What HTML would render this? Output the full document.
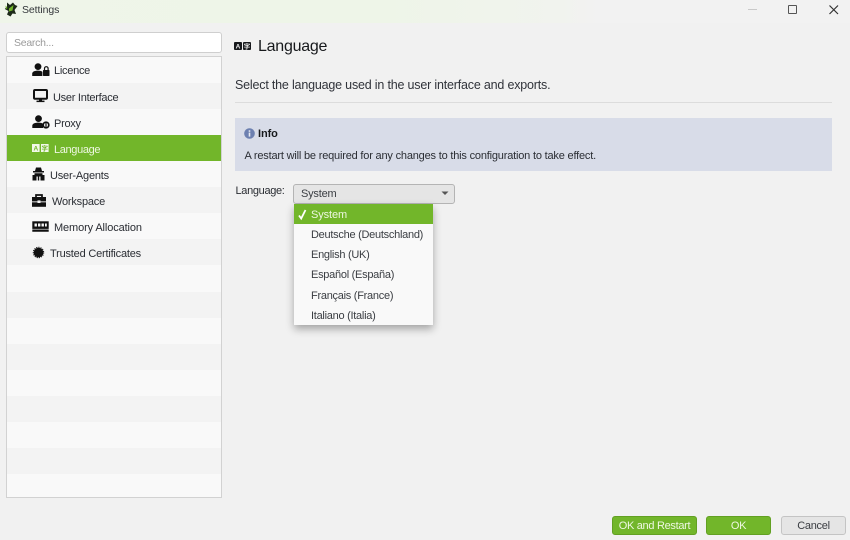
<!DOCTYPE html>
<html>
<head>
<meta charset="utf-8">
<style>
html,body{margin:0;padding:0}
body{width:850px;height:540px;overflow:hidden;background:#f1f1f1;position:relative;font-family:"Liberation Sans",sans-serif;font-size:11px;color:#2a2d33}
.a{position:absolute;white-space:nowrap}
#tb{left:0;top:0;width:850px;height:23px;background:linear-gradient(90deg,#eff5e9 0,#eef5e8 380px,#f1f3ee 560px,#f2f2f2 600px,#f2f2f2 850px)}
#search{left:6px;top:32px;width:214px;height:19px;background:#fff;border:1px solid #cfcfcf;border-radius:3px}
#list{left:6px;top:56px;width:214px;height:440px;border:1px solid #d2d2d2;background:#f9f9f9;overflow:hidden}
.r{position:absolute;left:0;width:214px;height:26px}
.e{background:#f3f3f3}
.g{background:#72b62a}
.t{position:absolute;line-height:14px;white-space:nowrap;letter-spacing:-.27px}
svg{position:absolute;overflow:visible}
.btn{position:absolute;top:516px;height:17px;border-radius:3px;text-align:center;line-height:19px;font-size:11px;letter-spacing:-.3px}
.gb{background:#72b62a;border:1px solid #62a022;color:#eef7e2}
#dd{left:294px;top:204px;width:139px;height:121px;background:#f9f9f9;box-shadow:0 4px 8px rgba(0,0,0,.32)}
.o{position:absolute;left:17px;line-height:14px;white-space:nowrap;color:#3a3d42;letter-spacing:-.27px}
</style>
</head>
<body>
<div class="a" id="tb"></div>
<svg style="left:4px;top:2px" width="14" height="15" viewBox="0 0 14 15"><path d="M3 .5 L6 3 L9 .5 L11 3 L13.5 4 L10.5 8 L12 12 L8.5 11.5 L6.5 14.5 L3 12.5 L4.5 9 L.8 7 L3 4.5 Z" fill="#1d2a18"/><path d="M5 6.5 L9.5 3 L8.5 8.5 L5 9.5 Z" fill="#72b62a"/><path d="M1.5 3.5 L3.5 6 L2 7Z" fill="#72b62a"/></svg>
<div class="a" style="left:22px;top:3px;line-height:14px;color:#33363a;font-size:10.5px;letter-spacing:-.08px">Settings</div>
<div class="a" style="left:748px;top:9px;width:9px;height:1px;background:#c9c9c9"></div>
<div class="a" style="left:788px;top:5px;width:7px;height:7px;border:1.4px solid #555;border-radius:1px"></div>
<svg style="left:829px;top:4.5px" width="10" height="10" viewBox="0 0 10 10"><path d="M.5 .5 L9 9 M9 .5 L.5 9" stroke="#333" stroke-width="1.2" fill="none"/></svg>

<div class="a" id="search"></div>
<div class="a" style="left:14px;top:36px;line-height:14px;color:#9a9a9a;font-size:10.5px;letter-spacing:-.25px">Search...</div>

<div class="a" id="list">
<div class="r" style="top:0"></div>
<div class="r e" style="top:26px"></div>
<div class="r" style="top:52px"></div>
<div class="r g" style="top:78px"></div>
<div class="r" style="top:104px"></div>
<div class="r e" style="top:130px"></div>
<div class="r" style="top:156px"></div>
<div class="r e" style="top:182px"></div>
<div class="r" style="top:208px"></div>
<div class="r e" style="top:235px"></div>
<div class="r" style="top:261px"></div>
<div class="r e" style="top:287px"></div>
<div class="r" style="top:313px"></div>
<div class="r e" style="top:339px"></div>
<div class="r" style="top:365px"></div>
<div class="r e" style="top:391px"></div>
<div class="r" style="top:417px"></div>
</div>

<!-- Licence -->
<svg style="left:32px;top:63px" width="18" height="14" viewBox="0 0 18 14"><circle cx="6" cy="3.6" r="3.4" fill="#111"/><path d="M.2 13 V10.6 C.2 8.6 2.8 7.6 6 7.6 C7.8 7.6 9.4 8 10.4 8.8 V13 Z" fill="#111"/><rect x="11" y="7" width="6.5" height="6" rx=".6" fill="#111"/><path d="M12.5 7.5 V5.5 a1.8 1.8 0 0 1 3.6 0 V7.5" fill="none" stroke="#111" stroke-width="1.2"/></svg>
<div class="a t" style="left:54px;top:64px">Licence</div>
<!-- UI -->
<svg style="left:33px;top:89px" width="15" height="14" viewBox="0 0 15 14"><rect x="1" y="1" width="13" height="8.8" rx="1" fill="none" stroke="#111" stroke-width="2"/><rect x="6" y="10" width="3" height="2" fill="#111"/><rect x="3.5" y="11.6" width="8" height="1.5" fill="#111"/></svg>
<div class="a t" style="left:53px;top:91px">User Interface</div>
<!-- Proxy -->
<svg style="left:32px;top:115px" width="18" height="14" viewBox="0 0 18 14"><circle cx="6.5" cy="3.6" r="3.4" fill="#111"/><path d="M.3 13 V10.6 C.3 8.6 3 7.6 6.5 7.6 C8.5 7.6 10 8 11 8.8 V13 Z" fill="#111"/><circle cx="14" cy="10" r="2.8" fill="none" stroke="#111" stroke-width="1.7"/><rect x="13.4" y="8" width="1.2" height="4" fill="#111"/></svg>
<div class="a t" style="left:54px;top:117px">Proxy</div>
<!-- Language -->
<svg style="left:32px;top:144px" width="17" height="9" viewBox="0 0 17 9"><rect x="0" y="0" width="7.6" height="8" fill="#f2f8ea"/><rect x="9" y="0" width="7.6" height="8" fill="#f2f8ea"/><text x="3.8" y="6.7" font-size="6.5" font-weight="bold" text-anchor="middle" fill="#72b62a" font-family="Liberation Sans">A</text><text x="12.8" y="6.7" font-size="6.5" font-weight="bold" text-anchor="middle" fill="#72b62a" font-family="Liberation Sans, Noto Sans CJK SC, sans-serif">字</text></svg>
<div class="a t" style="left:54px;top:143px;color:#eef7e2;letter-spacing:-.35px">Language</div>
<!-- User-Agents -->
<svg style="left:32px;top:167px" width="13" height="14" viewBox="0 0 13 14"><path d="M4 .5 H9 L10 4 H12 V5.5 H1 V4 H3 Z" fill="#111"/><path d="M2.5 6.3 H10.5 L10.5 8 H12.5 V13.5 H.5 V8 H2.5 Z" fill="#111"/><rect x="4.5" y="9.5" width="1.3" height="4" fill="#f9f9f9"/><rect x="7.2" y="9.5" width="1.3" height="4" fill="#f9f9f9"/></svg>
<div class="a t" style="left:50px;top:169px;letter-spacing:-.2px">User-Agents</div>
<!-- Workspace -->
<svg style="left:32px;top:194px" width="14" height="13" viewBox="0 0 14 13"><path d="M4 3 V1 H10 V3" fill="none" stroke="#111" stroke-width="1.7"/><rect x="0" y="3" width="14" height="4.4" fill="#111"/><rect x="0" y="8.3" width="14" height="4.5" fill="#111"/><rect x="5.5" y="6.4" width="3" height="2.6" fill="#f3f3f3"/></svg>
<div class="a t" style="left:52px;top:195px;letter-spacing:-.2px">Workspace</div>
<!-- Memory -->
<svg style="left:32px;top:221px" width="17" height="11" viewBox="0 0 17 11"><rect x=".3" y=".3" width="16.4" height="7.6" fill="#111"/><rect x="2.5" y="2.5" width="2.4" height="3" fill="#f9f9f9"/><rect x="6" y="2.5" width="2.4" height="3" fill="#f9f9f9"/><rect x="9.5" y="2.5" width="2.4" height="3" fill="#f9f9f9"/><rect x="13" y="2.5" width="1.8" height="3" fill="#f9f9f9"/><path d="M.3 9.6 H16.7" stroke="#111" stroke-width="2.2"/></svg>
<div class="a t" style="left:54px;top:221px;letter-spacing:-.12px">Memory Allocation</div>
<!-- Trusted -->
<svg style="left:33px;top:247px" width="11" height="11" viewBox="0 0 11 11"><circle cx="5.5" cy="5.5" r="4.8" fill="#111"/><circle cx="5.5" cy="5.5" r="5.2" fill="none" stroke="#111" stroke-width="1" stroke-dasharray="1.2 1"/></svg>
<div class="a t" style="left:50px;top:247px;letter-spacing:-.2px">Trusted Certificates</div>

<!-- Main -->
<svg style="left:234px;top:42px" width="17" height="9" viewBox="0 0 17 9"><rect x="0" y="0" width="8" height="8" rx="1" fill="#17191c"/><rect x="9" y="0" width="8" height="8" rx="1" fill="#17191c"/><text x="4" y="6.7" font-size="6.5" font-weight="bold" text-anchor="middle" fill="#f1f1f1" font-family="Liberation Sans">A</text><text x="13" y="6.7" font-size="6.5" font-weight="bold" text-anchor="middle" fill="#f1f1f1" font-family="Liberation Sans, Noto Sans CJK SC, sans-serif">字</text></svg>
<div class="a" style="left:258px;top:37px;font-size:16px;line-height:20px;color:#17191c;letter-spacing:-.25px">Language</div>
<div class="a" style="left:235px;top:77px;font-size:12.5px;line-height:16px;color:#30333a;letter-spacing:-.19px">Select the language used in the user interface and exports.</div>
<div class="a" style="left:235px;top:102px;width:597px;height:1px;background:#dcdcdc"></div>
<div class="a" style="left:235px;top:118px;width:597px;height:53px;background:#d8dce8"></div>
<svg style="left:244px;top:128px" width="11" height="11" viewBox="0 0 11 11"><circle cx="5.5" cy="5.5" r="5.3" fill="#6d80b0"/><rect x="4.7" y="4.6" width="1.6" height="4" fill="#e8ebf3"/><rect x="4.7" y="2.3" width="1.6" height="1.5" fill="#e8ebf3"/></svg>
<div class="a" style="left:258px;top:127px;line-height:14px;font-weight:bold;color:#17191c;letter-spacing:-.1px">Info</div>
<div class="a" style="left:244.5px;top:149px;line-height:14px;color:#2a2d33;letter-spacing:-.19px">A restart will be required for any changes to this configuration to take effect.</div>

<div class="a" style="left:235.5px;top:184px;line-height:14px;color:#2a2d33;letter-spacing:-.33px">Language:</div>
<div class="a" style="left:293px;top:184px;width:160px;height:18px;background:#e5e5e5;border:1px solid #b4b4b4;border-radius:3px"></div>
<div class="a" style="left:301px;top:187px;line-height:14px;color:#3a3d42;letter-spacing:-.2px">System</div>
<svg style="left:441px;top:191px" width="8" height="5" viewBox="0 0 8 5"><path d="M.5 .5 H7.5 L4 4 Z" fill="#555"/></svg>

<div class="a" id="dd">
<div style="position:absolute;left:0;top:0;width:139px;height:20px;background:#72b62a"></div>
<svg style="left:4px;top:4.5px" width="9" height="11" viewBox="0 0 9 11"><path d="M1 6.5 L3.2 9.5 L7.5 1" fill="none" stroke="#fff" stroke-width="1.8"/></svg>
<div class="o" style="top:4px;color:#eef7e2;letter-spacing:-.1px">System</div>
<div class="o" style="top:24px">Deutsche (Deutschland)</div>
<div class="o" style="top:44px">English (UK)</div>
<div class="o" style="top:64px">Español (España)</div>
<div class="o" style="top:85px">Français (France)</div>
<div class="o" style="top:105px">Italiano (Italia)</div>
</div>

<div class="btn gb" style="left:612px;width:83px">OK and Restart</div>
<div class="btn gb" style="left:706px;width:63px">OK</div>
<div class="btn" style="left:781px;width:63px;background:#e5e5e5;border:1px solid #c4c4c4;color:#3a3d42">Cancel</div>
</body>
</html>
